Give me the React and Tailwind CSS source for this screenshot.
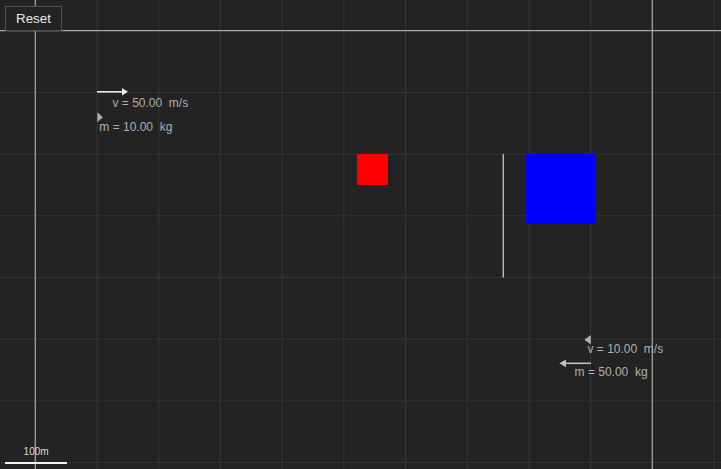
import React from "react";

const STEP = 61.7;
const X0 = 35.3;
const Y0 = 30.7;

const vLines = Array.from({ length: 12 }, (_, i) => X0 + i * STEP);
const hLines = Array.from({ length: 8 }, (_, i) => Y0 + i * STEP);

const font = { fontFamily: '"Liberation Sans", Arial, sans-serif' };

const Label = ({ x, y, children }) => (
  <span
    className="absolute whitespace-pre text-[12px] leading-none text-[#b0b0b0]"
    style={{ left: x, top: y, ...font }}
  >
    {children}
  </span>
);

const Grid = () => (
  <svg className="absolute inset-0" width="721" height="469">
    {vLines.map((x) => (
      <line key={"v" + x} x1={x} y1="0" x2={x} y2="469" stroke="#363636" strokeWidth="1" />
    ))}
    {hLines.map((y) => (
      <line key={"h" + y} x1="0" y1={y} x2="721" y2={y} stroke="#363636" strokeWidth="1" />
    ))}
    {/* axes */}
    <line x1={X0} y1="0" x2={X0} y2="469" stroke="#a8a8a8" strokeWidth="1.2" />
    <line x1={X0 + 10 * STEP} y1="0" x2={X0 + 10 * STEP} y2="469" stroke="#a8a8a8" strokeWidth="1.2" />
    <line x1="0" y1={Y0} x2="721" y2={Y0} stroke="#a8a8a8" strokeWidth="1.2" />

    {/* wall */}
    <line x1="503.3" y1="154" x2="503.3" y2="277.5" stroke="#c4c4c4" strokeWidth="1.3" />

    {/* velocity arrow, body 1 */}
    <line x1="97" y1="91.8" x2="123" y2="91.8" stroke="#ececec" strokeWidth="1.6" />
    <polygon points="122,88 128,91.8 122,95.6" fill="#ececec" />
    <polygon points="97.3,112.3 102.8,117.3 97.3,122.3" fill="#b0b0b0" />

    {/* velocity arrow, body 2 */}
    <polygon points="590.8,335 584.3,339.8 590.8,344.6" fill="#b0b0b0" />
    <line x1="565" y1="363.3" x2="591" y2="363.3" stroke="#c0c0c0" strokeWidth="1.6" />
    <polygon points="559.3,363.3 566,359.4 566,367.2" fill="#c0c0c0" />
  </svg>
);

export default function App() {
  return (
    <div className="relative w-[721px] h-[469px] overflow-hidden bg-[#232323] flex flex-col justify-between items-start pl-[5px] pt-[6px] pb-[5px]">
      <Grid />

      {/* bodies */}
      <div className="absolute left-[357px] top-[154px] w-[31px] h-[31px] bg-[#ff0000]" />
      <div className="absolute left-[526px] top-[154px] w-[70px] h-[70px] bg-[#0000ff]" />

      <Label x={112.5} y={96.5}>v = 50.00  m/s</Label>
      <Label x={99.3} y={120.8}>m = 10.00  kg</Label>
      <Label x={587.5} y={343.1}>v = 10.00  m/s</Label>
      <Label x={574.6} y={365.9}>m = 50.00  kg</Label>

      <button
        className="relative w-[57px] h-[25px] border border-[#505050] bg-[#232323] text-[13.33px] text-[#ededed] flex items-center justify-center"
        style={font}
      >
        Reset
      </button>

      {/* scale */}
      <div className="relative flex flex-col items-center gap-[5px] w-[61.7px]">
        <span className="text-[10px] leading-none text-[#d8d8d8] pl-[0.5px]" style={font}>
          100m
        </span>
        <div className="w-full h-[2.5px] bg-[#f2f2f2]" />
      </div>
    </div>
  );
}
